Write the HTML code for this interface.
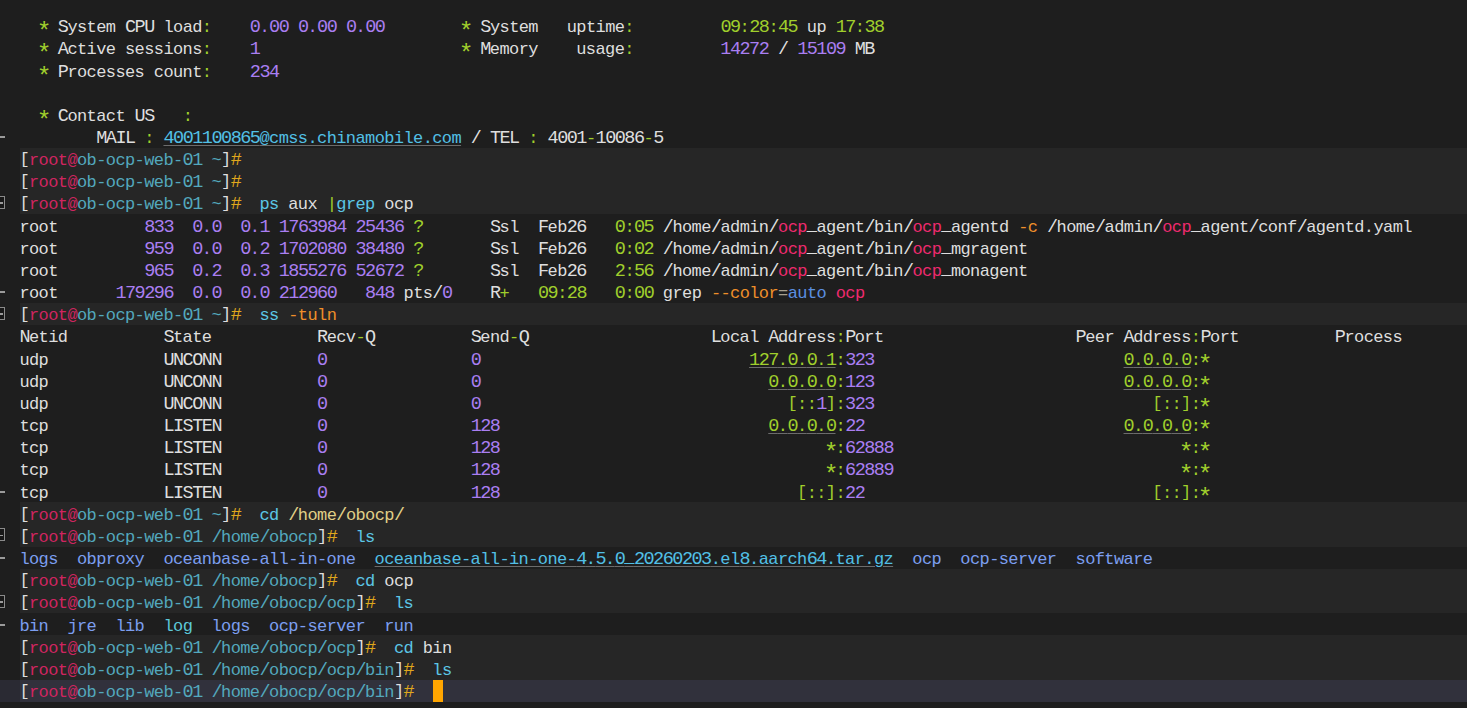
<!DOCTYPE html><html><head><meta charset="utf-8"><style>
html,body{margin:0;padding:0;width:1467px;height:708px;overflow:hidden;background:#1e1e1e;}
.r{position:absolute;left:0;width:1467px;height:22.16px;}
.hl{position:absolute;left:20.0px;right:0;height:22.16px;background:#262626;}
.cr{position:absolute;left:20.0px;right:0;height:22.16px;background:#31313c;}
.t{position:absolute;left:19.4px;white-space:pre;font-family:"Liberation Mono",monospace;font-size:17px;letter-spacing:-0.6017px;line-height:22.16px;color:#dedede;}
.u{text-decoration:underline;text-decoration-color:#6c6c6c;text-underline-offset:2.3px;text-decoration-thickness:1px;}
.ast{display:inline-block;width:9.6px;text-align:center;transform:translateY(5.2px) scale(1.45);}
.us{position:relative;top:-2px;}
.br{position:relative;top:-1px;}
.C{font-size:18.5px;letter-spacing:-1.5018px;line-height:0;}
.dash{position:absolute;left:0;width:5px;height:2px;background:#9a9a9a;}
.box{position:absolute;left:-8px;width:11px;height:11px;border:1.4px solid #8a8a8a;background:#181818;}
.box i{position:absolute;left:0;right:1.2px;top:5.4px;height:1.8px;background:#9a9a9a;}

</style></head><body>
<div class="hl" style="top:147.76px"></div>
<div class="hl" style="top:169.92px"></div>
<div class="hl" style="top:192.08px"></div>
<div class="hl" style="top:302.88px"></div>
<div class="hl" style="top:502.32px"></div>
<div class="hl" style="top:524.48px"></div>
<div class="hl" style="top:568.80px"></div>
<div class="hl" style="top:590.96px"></div>
<div class="hl" style="top:635.28px"></div>
<div class="hl" style="top:657.44px"></div>
<div class="cr" style="top:679.60px;left:0;width:20px;right:auto;background:#2a2a33"></div>
<div class="cr" style="top:679.60px"></div>
<div style="position:absolute;left:432.80px;top:679.60px;width:10px;height:22.16px;background:#ffa500"></div>
<div class="dash" style="top:136.10px"></div>
<div class="dash" style="top:291.22px"></div>
<div class="dash" style="top:490.66px"></div>
<div class="dash" style="top:557.14px"></div>
<div class="dash" style="top:623.62px"></div>
<div class="box" style="top:195.88px"><i></i></div>
<div class="box" style="top:306.68px"><i></i></div>
<div class="box" style="top:528.28px"><i></i></div>
<div class="box" style="top:594.76px"><i></i></div>
<div class="t" style="top:17.20px">  <span class="ast" style="color:#a0cf2c">*</span> <span style="color:#dedede"><span class="C">S</span>ystem <span class="C">CPU</span> load</span><span style="color:#a0cf2c">:</span>    <span style="color:#aa7ef2"><span class="C">0</span>.<span class="C">00</span> <span class="C">0</span>.<span class="C">00</span> <span class="C">0</span>.<span class="C">00</span></span>        <span class="ast" style="color:#a0cf2c">*</span> <span style="color:#dedede"><span class="C">S</span>ystem   uptime</span><span style="color:#a0cf2c">:</span>         <span style="color:#a0cf2c"><span class="C">09</span>:<span class="C">28</span>:<span class="C">45</span></span> <span style="color:#dedede">up</span> <span style="color:#a0cf2c"><span class="C">17</span>:<span class="C">38</span></span></div>
<div class="t" style="top:39.36px">  <span class="ast" style="color:#a0cf2c">*</span> <span style="color:#dedede"><span class="C">A</span>ctive sessions</span><span style="color:#a0cf2c">:</span>    <span style="color:#aa7ef2"><span class="C">1</span></span>                     <span class="ast" style="color:#a0cf2c">*</span> <span style="color:#dedede"><span class="C">M</span>emory    usage</span><span style="color:#a0cf2c">:</span>         <span style="color:#aa7ef2"><span class="C">14272</span></span> <span style="color:#dedede"><span class="C">/</span></span> <span style="color:#aa7ef2"><span class="C">15109</span></span> <span style="color:#dedede"><span class="C">MB</span></span></div>
<div class="t" style="top:61.52px">  <span class="ast" style="color:#a0cf2c">*</span> <span style="color:#dedede"><span class="C">P</span>rocesses count</span><span style="color:#a0cf2c">:</span>    <span style="color:#aa7ef2"><span class="C">234</span></span></div>
<div class="t" style="top:105.84px">  <span class="ast" style="color:#a0cf2c">*</span> <span style="color:#dedede"><span class="C">C</span>ontact <span class="C">US</span></span>   <span style="color:#a0cf2c">:</span></div>
<div class="t" style="top:128.00px">        <span style="color:#dedede"><span class="C">MAIL</span></span> <span style="color:#a0cf2c">:</span> <span class="u" style="color:#52c0e6"><span class="C">4001100865</span>@cmss.chinamobile.com</span> <span style="color:#dedede"><span class="C">/</span></span> <span style="color:#dedede"><span class="C">TEL</span></span> <span style="color:#a0cf2c">:</span> <span style="color:#dedede"><span class="C">4001</span></span><span style="color:#a0cf2c">-</span><span style="color:#dedede"><span class="C">10086</span></span><span style="color:#a0cf2c">-</span><span style="color:#dedede"><span class="C">5</span></span></div>
<div class="t" style="top:150.16px"><span style="color:#dedede"><span class="br">[</span></span><span style="color:#cf2560">root@</span><span style="color:#53a8bd">ob-ocp-web-<span class="C">01</span> ~</span><span style="color:#dedede"><span class="br">]</span></span><span style="color:#e0a81c"><span class="C">#</span></span></div>
<div class="t" style="top:172.32px"><span style="color:#dedede"><span class="br">[</span></span><span style="color:#cf2560">root@</span><span style="color:#53a8bd">ob-ocp-web-<span class="C">01</span> ~</span><span style="color:#dedede"><span class="br">]</span></span><span style="color:#e0a81c"><span class="C">#</span></span></div>
<div class="t" style="top:194.48px"><span style="color:#dedede"><span class="br">[</span></span><span style="color:#cf2560">root@</span><span style="color:#53a8bd">ob-ocp-web-<span class="C">01</span> ~</span><span style="color:#dedede"><span class="br">]</span></span><span style="color:#e0a81c"><span class="C">#</span></span>  <span style="color:#5cc6e6">ps</span> <span style="color:#dedede">aux</span> <span style="color:#a0cf2c">|</span><span style="color:#5cc6e6">grep</span> <span style="color:#dedede">ocp</span></div>
<div class="t" style="top:216.64px"><span style="color:#dedede">root</span>         <span style="color:#aa7ef2"><span class="C">833</span></span>  <span style="color:#aa7ef2"><span class="C">0</span>.<span class="C">0</span></span>  <span style="color:#aa7ef2"><span class="C">0</span>.<span class="C">1</span></span> <span style="color:#aa7ef2"><span class="C">1763984</span></span> <span style="color:#aa7ef2"><span class="C">25436</span></span> <span style="color:#a0cf2c"><span class="C">?</span></span>       <span style="color:#dedede"><span class="C">S</span>sl</span>  <span style="color:#dedede"><span class="C">F</span>eb<span class="C">26</span></span>   <span style="color:#a0cf2c"><span class="C">0</span>:<span class="C">05</span></span> <span style="color:#dedede"><span class="C">/</span>home<span class="C">/</span>admin<span class="C">/</span></span><span style="color:#ee2a6e">ocp</span><span style="color:#dedede"><span class="us">_</span>agent<span class="C">/</span>bin<span class="C">/</span></span><span style="color:#ee2a6e">ocp</span><span style="color:#dedede"><span class="us">_</span>agentd</span> <span style="color:#ef8f2a">-c</span> <span style="color:#dedede"><span class="C">/</span>home<span class="C">/</span>admin<span class="C">/</span></span><span style="color:#ee2a6e">ocp</span><span style="color:#dedede"><span class="us">_</span>agent<span class="C">/</span>conf<span class="C">/</span>agentd.yaml</span></div>
<div class="t" style="top:238.80px"><span style="color:#dedede">root</span>         <span style="color:#aa7ef2"><span class="C">959</span></span>  <span style="color:#aa7ef2"><span class="C">0</span>.<span class="C">0</span></span>  <span style="color:#aa7ef2"><span class="C">0</span>.<span class="C">2</span></span> <span style="color:#aa7ef2"><span class="C">1702080</span></span> <span style="color:#aa7ef2"><span class="C">38480</span></span> <span style="color:#a0cf2c"><span class="C">?</span></span>       <span style="color:#dedede"><span class="C">S</span>sl</span>  <span style="color:#dedede"><span class="C">F</span>eb<span class="C">26</span></span>   <span style="color:#a0cf2c"><span class="C">0</span>:<span class="C">02</span></span> <span style="color:#dedede"><span class="C">/</span>home<span class="C">/</span>admin<span class="C">/</span></span><span style="color:#ee2a6e">ocp</span><span style="color:#dedede"><span class="us">_</span>agent<span class="C">/</span>bin<span class="C">/</span></span><span style="color:#ee2a6e">ocp</span><span style="color:#dedede"><span class="us">_</span>mgragent</span></div>
<div class="t" style="top:260.96px"><span style="color:#dedede">root</span>         <span style="color:#aa7ef2"><span class="C">965</span></span>  <span style="color:#aa7ef2"><span class="C">0</span>.<span class="C">2</span></span>  <span style="color:#aa7ef2"><span class="C">0</span>.<span class="C">3</span></span> <span style="color:#aa7ef2"><span class="C">1855276</span></span> <span style="color:#aa7ef2"><span class="C">52672</span></span> <span style="color:#a0cf2c"><span class="C">?</span></span>       <span style="color:#dedede"><span class="C">S</span>sl</span>  <span style="color:#dedede"><span class="C">F</span>eb<span class="C">26</span></span>   <span style="color:#a0cf2c"><span class="C">2</span>:<span class="C">56</span></span> <span style="color:#dedede"><span class="C">/</span>home<span class="C">/</span>admin<span class="C">/</span></span><span style="color:#ee2a6e">ocp</span><span style="color:#dedede"><span class="us">_</span>agent<span class="C">/</span>bin<span class="C">/</span></span><span style="color:#ee2a6e">ocp</span><span style="color:#dedede"><span class="us">_</span>monagent</span></div>
<div class="t" style="top:283.12px"><span style="color:#dedede">root</span>      <span style="color:#aa7ef2"><span class="C">179296</span></span>  <span style="color:#aa7ef2"><span class="C">0</span>.<span class="C">0</span></span>  <span style="color:#aa7ef2"><span class="C">0</span>.<span class="C">0</span></span> <span style="color:#aa7ef2"><span class="C">212960</span></span>   <span style="color:#aa7ef2"><span class="C">848</span></span> <span style="color:#dedede">pts<span class="C">/</span></span><span style="color:#aa7ef2"><span class="C">0</span></span>    <span style="color:#dedede"><span class="C">R</span></span><span style="color:#a0cf2c">+</span>   <span style="color:#a0cf2c"><span class="C">09</span>:<span class="C">28</span></span>   <span style="color:#a0cf2c"><span class="C">0</span>:<span class="C">00</span></span> <span style="color:#dedede">grep</span> <span style="color:#ef8f2a">--color</span><span style="color:#a8a090">=</span><span style="color:#5b8fe0">auto</span> <span style="color:#ee2a6e">ocp</span></div>
<div class="t" style="top:305.28px"><span style="color:#dedede"><span class="br">[</span></span><span style="color:#cf2560">root@</span><span style="color:#53a8bd">ob-ocp-web-<span class="C">01</span> ~</span><span style="color:#dedede"><span class="br">]</span></span><span style="color:#e0a81c"><span class="C">#</span></span>  <span style="color:#5cc6e6">ss</span> <span style="color:#ef8f2a">-tuln</span></div>
<div class="t" style="top:327.44px"><span style="color:#dedede"><span class="C">N</span>etid</span>          <span style="color:#dedede"><span class="C">S</span>tate</span>           <span style="color:#dedede"><span class="C">R</span>ecv</span><span style="color:#a0cf2c">-</span><span style="color:#dedede"><span class="C">Q</span></span>          <span style="color:#dedede"><span class="C">S</span>end</span><span style="color:#a0cf2c">-</span><span style="color:#dedede"><span class="C">Q</span></span>                   <span style="color:#dedede"><span class="C">L</span>ocal <span class="C">A</span>ddress</span><span style="color:#a0cf2c">:</span><span style="color:#dedede"><span class="C">P</span>ort</span>                    <span style="color:#dedede"><span class="C">P</span>eer <span class="C">A</span>ddress</span><span style="color:#a0cf2c">:</span><span style="color:#dedede"><span class="C">P</span>ort</span>          <span style="color:#dedede"><span class="C">P</span>rocess</span></div>
<div class="t" style="top:349.60px"><span style="color:#dedede">udp</span>            <span style="color:#dedede"><span class="C">UNCONN</span></span>          <span style="color:#aa7ef2"><span class="C">0</span></span>               <span style="color:#aa7ef2"><span class="C">0</span></span>                            <span class="u" style="color:#a0cf2c"><span class="C">127</span>.<span class="C">0</span>.<span class="C">0</span>.<span class="C">1</span></span><span style="color:#a0cf2c">:</span><span style="color:#aa7ef2"><span class="C">323</span></span>                          <span class="u" style="color:#a0cf2c"><span class="C">0</span>.<span class="C">0</span>.<span class="C">0</span>.<span class="C">0</span></span><span style="color:#a0cf2c">:</span><span class="ast" style="color:#a0cf2c">*</span></div>
<div class="t" style="top:371.76px"><span style="color:#dedede">udp</span>            <span style="color:#dedede"><span class="C">UNCONN</span></span>          <span style="color:#aa7ef2"><span class="C">0</span></span>               <span style="color:#aa7ef2"><span class="C">0</span></span>                              <span class="u" style="color:#a0cf2c"><span class="C">0</span>.<span class="C">0</span>.<span class="C">0</span>.<span class="C">0</span></span><span style="color:#a0cf2c">:</span><span style="color:#aa7ef2"><span class="C">123</span></span>                          <span class="u" style="color:#a0cf2c"><span class="C">0</span>.<span class="C">0</span>.<span class="C">0</span>.<span class="C">0</span></span><span style="color:#a0cf2c">:</span><span class="ast" style="color:#a0cf2c">*</span></div>
<div class="t" style="top:393.92px"><span style="color:#dedede">udp</span>            <span style="color:#dedede"><span class="C">UNCONN</span></span>          <span style="color:#aa7ef2"><span class="C">0</span></span>               <span style="color:#aa7ef2"><span class="C">0</span></span>                                <span style="color:#a0cf2c"><span class="br">[</span>::</span><span style="color:#aa7ef2"><span class="C">1</span></span><span style="color:#a0cf2c"><span class="br">]</span></span><span style="color:#a0cf2c">:</span><span style="color:#aa7ef2"><span class="C">323</span></span>                             <span style="color:#a0cf2c"><span class="br">[</span>::<span class="br">]</span></span><span style="color:#a0cf2c">:</span><span class="ast" style="color:#a0cf2c">*</span></div>
<div class="t" style="top:416.08px"><span style="color:#dedede">tcp</span>            <span style="color:#dedede"><span class="C">LISTEN</span></span>          <span style="color:#aa7ef2"><span class="C">0</span></span>               <span style="color:#aa7ef2"><span class="C">128</span></span>                            <span class="u" style="color:#a0cf2c"><span class="C">0</span>.<span class="C">0</span>.<span class="C">0</span>.<span class="C">0</span></span><span style="color:#a0cf2c">:</span><span style="color:#aa7ef2"><span class="C">22</span></span>                           <span class="u" style="color:#a0cf2c"><span class="C">0</span>.<span class="C">0</span>.<span class="C">0</span>.<span class="C">0</span></span><span style="color:#a0cf2c">:</span><span class="ast" style="color:#a0cf2c">*</span></div>
<div class="t" style="top:438.24px"><span style="color:#dedede">tcp</span>            <span style="color:#dedede"><span class="C">LISTEN</span></span>          <span style="color:#aa7ef2"><span class="C">0</span></span>               <span style="color:#aa7ef2"><span class="C">128</span></span>                                  <span class="ast" style="color:#a0cf2c">*</span><span style="color:#a0cf2c">:</span><span style="color:#aa7ef2"><span class="C">62888</span></span>                              <span class="ast" style="color:#a0cf2c">*</span><span style="color:#a0cf2c">:</span><span class="ast" style="color:#a0cf2c">*</span></div>
<div class="t" style="top:460.40px"><span style="color:#dedede">tcp</span>            <span style="color:#dedede"><span class="C">LISTEN</span></span>          <span style="color:#aa7ef2"><span class="C">0</span></span>               <span style="color:#aa7ef2"><span class="C">128</span></span>                                  <span class="ast" style="color:#a0cf2c">*</span><span style="color:#a0cf2c">:</span><span style="color:#aa7ef2"><span class="C">62889</span></span>                              <span class="ast" style="color:#a0cf2c">*</span><span style="color:#a0cf2c">:</span><span class="ast" style="color:#a0cf2c">*</span></div>
<div class="t" style="top:482.56px"><span style="color:#dedede">tcp</span>            <span style="color:#dedede"><span class="C">LISTEN</span></span>          <span style="color:#aa7ef2"><span class="C">0</span></span>               <span style="color:#aa7ef2"><span class="C">128</span></span>                               <span style="color:#a0cf2c"><span class="br">[</span>::<span class="br">]</span></span><span style="color:#a0cf2c">:</span><span style="color:#aa7ef2"><span class="C">22</span></span>                              <span style="color:#a0cf2c"><span class="br">[</span>::<span class="br">]</span></span><span style="color:#a0cf2c">:</span><span class="ast" style="color:#a0cf2c">*</span></div>
<div class="t" style="top:504.72px"><span style="color:#dedede"><span class="br">[</span></span><span style="color:#cf2560">root@</span><span style="color:#53a8bd">ob-ocp-web-<span class="C">01</span> ~</span><span style="color:#dedede"><span class="br">]</span></span><span style="color:#e0a81c"><span class="C">#</span></span>  <span style="color:#5cc6e6">cd</span> <span style="color:#e0cf86"><span class="C">/</span>home<span class="C">/</span>obocp<span class="C">/</span></span></div>
<div class="t" style="top:526.88px"><span style="color:#dedede"><span class="br">[</span></span><span style="color:#cf2560">root@</span><span style="color:#53a8bd">ob-ocp-web-<span class="C">01</span> <span class="C">/</span>home<span class="C">/</span>obocp</span><span style="color:#dedede"><span class="br">]</span></span><span style="color:#e0a81c"><span class="C">#</span></span>  <span style="color:#5cc6e6">ls</span></div>
<div class="t" style="top:549.04px"><span style="color:#7c9ef0">logs</span>  <span style="color:#7c9ef0">obproxy</span>  <span style="color:#7c9ef0">oceanbase-all-in-one</span>  <span class="u" style="color:#52c0e6">oceanbase-all-in-one-<span class="C">4</span>.<span class="C">5</span>.<span class="C">0</span><span class="us">_</span><span class="C">20260203</span>.el<span class="C">8</span>.aarch<span class="C">64</span>.tar.gz</span>  <span style="color:#7c9ef0">ocp</span>  <span style="color:#7c9ef0">ocp-server</span>  <span style="color:#7c9ef0">software</span></div>
<div class="t" style="top:571.20px"><span style="color:#dedede"><span class="br">[</span></span><span style="color:#cf2560">root@</span><span style="color:#53a8bd">ob-ocp-web-<span class="C">01</span> <span class="C">/</span>home<span class="C">/</span>obocp</span><span style="color:#dedede"><span class="br">]</span></span><span style="color:#e0a81c"><span class="C">#</span></span>  <span style="color:#5cc6e6">cd</span> <span style="color:#dedede">ocp</span></div>
<div class="t" style="top:593.36px"><span style="color:#dedede"><span class="br">[</span></span><span style="color:#cf2560">root@</span><span style="color:#53a8bd">ob-ocp-web-<span class="C">01</span> <span class="C">/</span>home<span class="C">/</span>obocp<span class="C">/</span>ocp</span><span style="color:#dedede"><span class="br">]</span></span><span style="color:#e0a81c"><span class="C">#</span></span>  <span style="color:#5cc6e6">ls</span></div>
<div class="t" style="top:615.52px"><span style="color:#7c9ef0">bin</span>  <span style="color:#7c9ef0">jre</span>  <span style="color:#7c9ef0">lib</span>  <span style="color:#5cc8d8">log</span>  <span style="color:#7c9ef0">logs</span>  <span style="color:#7c9ef0">ocp-server</span>  <span style="color:#7c9ef0">run</span></div>
<div class="t" style="top:637.68px"><span style="color:#dedede"><span class="br">[</span></span><span style="color:#cf2560">root@</span><span style="color:#53a8bd">ob-ocp-web-<span class="C">01</span> <span class="C">/</span>home<span class="C">/</span>obocp<span class="C">/</span>ocp</span><span style="color:#dedede"><span class="br">]</span></span><span style="color:#e0a81c"><span class="C">#</span></span>  <span style="color:#5cc6e6">cd</span> <span style="color:#dedede">bin</span></div>
<div class="t" style="top:659.84px"><span style="color:#dedede"><span class="br">[</span></span><span style="color:#cf2560">root@</span><span style="color:#53a8bd">ob-ocp-web-<span class="C">01</span> <span class="C">/</span>home<span class="C">/</span>obocp<span class="C">/</span>ocp<span class="C">/</span>bin</span><span style="color:#dedede"><span class="br">]</span></span><span style="color:#e0a81c"><span class="C">#</span></span>  <span style="color:#5cc6e6">ls</span></div>
<div class="t" style="top:682.00px"><span style="color:#dedede"><span class="br">[</span></span><span style="color:#cf2560">root@</span><span style="color:#53a8bd">ob-ocp-web-<span class="C">01</span> <span class="C">/</span>home<span class="C">/</span>obocp<span class="C">/</span>ocp<span class="C">/</span>bin</span><span style="color:#dedede"><span class="br">]</span></span><span style="color:#e0a81c"><span class="C">#</span></span></div>
</body></html>
